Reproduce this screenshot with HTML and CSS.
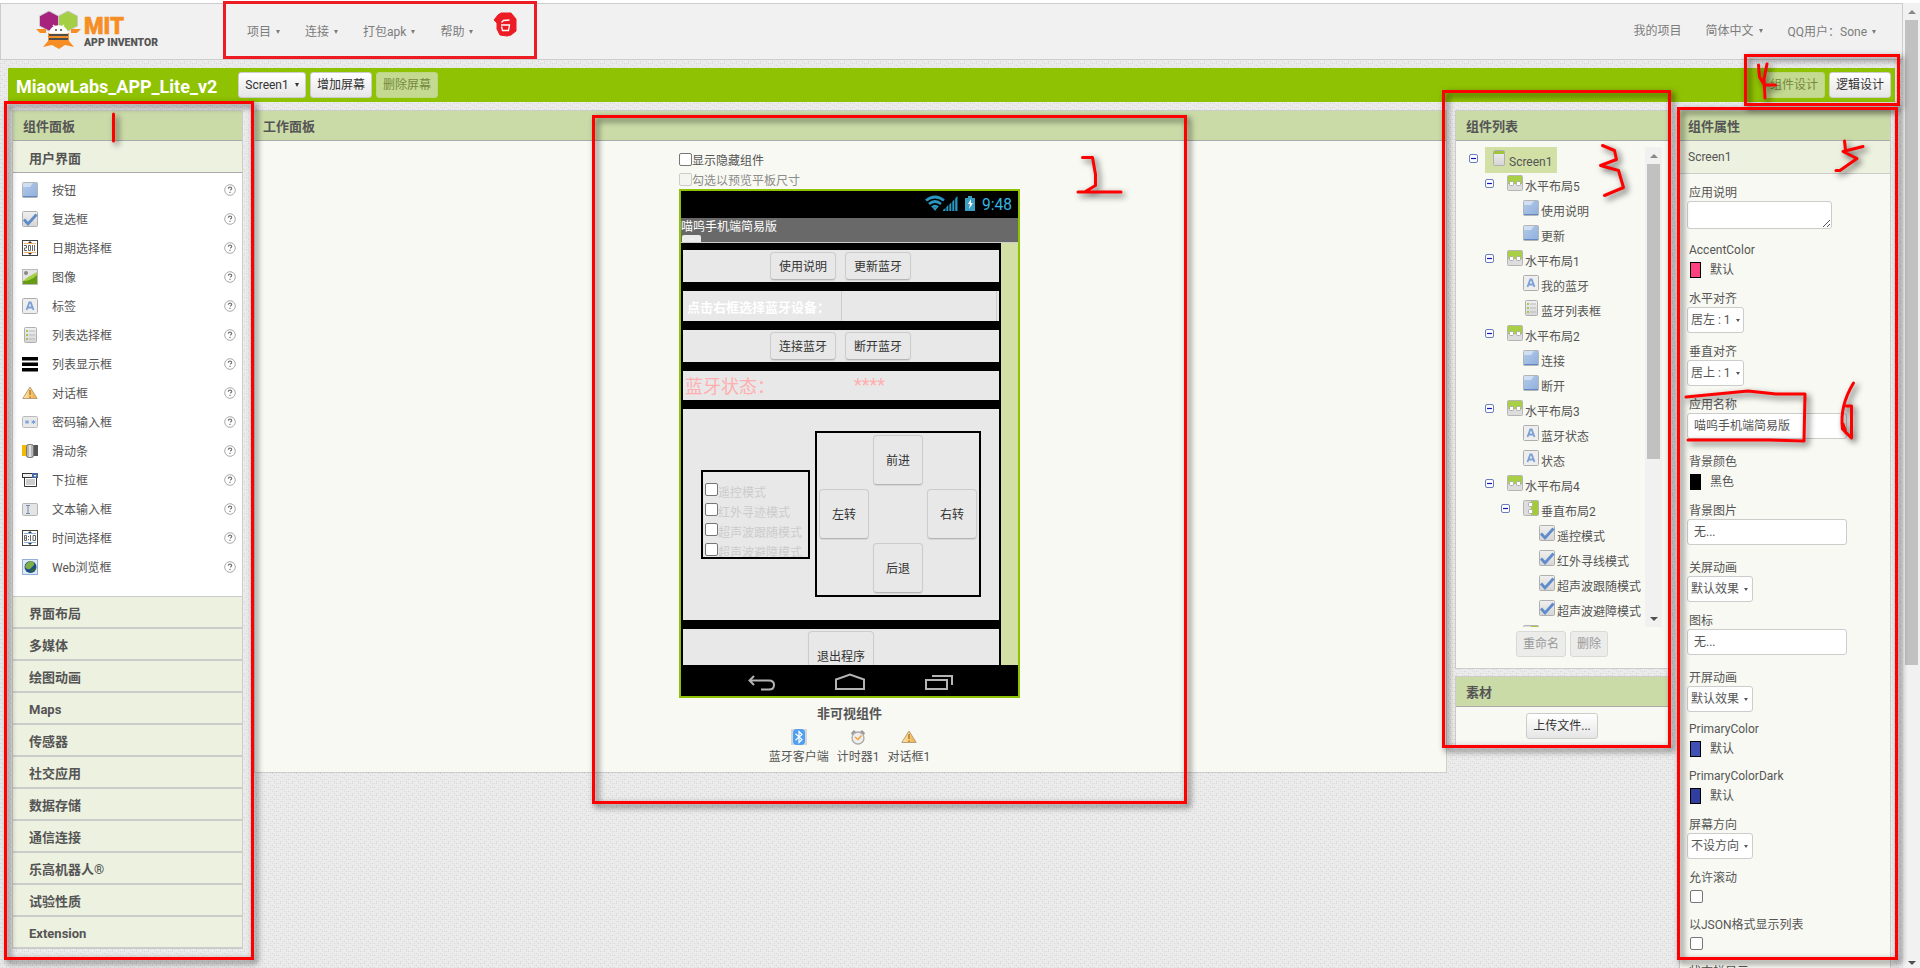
FILE: index.html
```html
<!DOCTYPE html>
<html lang="zh-CN">
<head>
<meta charset="utf-8">
<title>MIT App Inventor</title>
<link rel="stylesheet" href="styles.css">
</head>
<body>
<svg class="defs" width="0" height="0" aria-hidden="true">
  <defs>
    <linearGradient id="gBlue" x1="0" y1="0" x2="1" y2="1"><stop offset="0" stop-color="#b4cbea"/><stop offset="1" stop-color="#8fafdb"/></linearGradient>
    <linearGradient id="gGrey" x1="0" y1="0" x2="0" y2="1"><stop offset="0" stop-color="#f0f0f0"/><stop offset="1" stop-color="#d5d5d5"/></linearGradient>
    <linearGradient id="gWarn" x1="0" y1="0" x2="1" y2="0"><stop offset="0" stop-color="#ffe9b0"/><stop offset="1" stop-color="#f0a93c"/></linearGradient>
    <symbol id="i-button" viewBox="0 0 16 16"><rect x=".5" y=".5" width="15" height="15" rx="1" fill="url(#gBlue)" stroke="#b5b5b5"/><path d="M1 14h14v1H1z" fill="#5f88c4"/><path d="M1 1h10L8 5H1z" fill="#e0eaf8" opacity=".7"/></symbol>
    <symbol id="i-check" viewBox="0 0 16 16"><rect x=".5" y=".5" width="15" height="15" rx="1" fill="url(#gGrey)" stroke="#b0b0b0"/><path d="M2 8.5 6 13l8.5-9.5" fill="none" stroke="#5f8bcb" stroke-width="2.8"/></symbol>
    <symbol id="i-date" viewBox="0 0 16 16"><rect x=".5" y=".5" width="15" height="15" fill="#fff" stroke="#444"/><path d="M6 3l2-2 2 2zM6 13l2 2 2-2z" fill="#333"/><path d="M2 3.500h12M2 12.500h12" stroke="#f0b070"/><path d="M2 5.500h2.500v2.500H2.500v2.500H5M6.500 5.500h2v5h-2zM10.500 5v6M12.500 5v6" fill="none" stroke="#666"/></symbol>
    <symbol id="i-image" viewBox="0 0 16 16"><rect x=".5" y=".5" width="15" height="15" fill="#e4e4e4" stroke="#bbb"/><path d="M1 12 6 8l9-5v12H1z" fill="#a5d043"/><path d="M1 12q8 0 14-6v9H1z" fill="#669c12"/><circle cx="4" cy="4" r="2" fill="#888"/></symbol>
    <symbol id="i-label" viewBox="0 0 16 16"><rect x=".5" y=".5" width="15" height="15" rx="1" fill="#eee" stroke="#aeaeae"/><path d="M4.500 12 7.300 4.500h1.400L11.500 12M5.500 9.500h5" fill="none" stroke="#7c9fd6" stroke-width="1.800"/></symbol>
    <symbol id="i-list" viewBox="0 0 16 16"><rect x="2.500" y=".5" width="12" height="15" rx="1" fill="url(#gGrey)" stroke="#b0b0b0"/><path d="M4 3h2v2H4zM4 7h2v2H4zM4 11h2v2H4z" fill="#a5c957"/><path d="M7 4h6M7 8h6M7 12h6" stroke="#bbb"/></symbol>
    <symbol id="i-listview" viewBox="0 0 16 16"><path d="M0 1h16v3.500H0zM0 6.500h16V10H0zM0 12h16v3.500H0z" fill="#000"/></symbol>
    <symbol id="i-warn" viewBox="0 0 16 16"><path d="M8 2 .8 13.500h14.400z" fill="url(#gWarn)" stroke="#b9a07c"/><path d="M8 5v5M8 11.500V13" stroke="#a36f1f" stroke-width="1.200"/></symbol>
    <symbol id="i-pass" viewBox="0 0 16 16"><rect x=".5" y="2.500" width="15" height="11" rx="1" fill="#e9e9e9" stroke="#bbb"/><path d="M5 6v4M3 7l4 2M3 9l4-2M11.500 6v4M9.500 7l4 2M9.500 9l4-2" stroke="#7ba2dc"/></symbol>
    <symbol id="i-slider" viewBox="0 0 16 16"><path d="M0 2h5v11H0z" fill="#f6b900"/><path d="M11 2h5v11h-5z" fill="#555"/><rect x="4.500" y="1.500" width="7" height="13" rx="2" fill="#b5b5b5" stroke="#777"/><path d="M8 2v12" stroke="#e0e0e0" stroke-width="2"/></symbol>
    <symbol id="i-spinner" viewBox="0 0 16 16"><path d="M2.500 5v9.500h12V5" fill="#fff" stroke="#333"/><rect x=".5" y="1.500" width="15" height="4" fill="#eee" stroke="#333"/><rect x="10" y="1" width="6" height="5" fill="#43699f"/><path d="M11.500 3h3L13 5z" fill="#fff"/><path d="M4 8h9M4 10h9M4 12h9" stroke="#999"/></symbol>
    <symbol id="i-text" viewBox="0 0 16 16"><rect x=".5" y="2.500" width="15" height="12" rx="1" fill="#e4e4e4" stroke="#b5b5b5"/><path d="M4 4.500h4M6 4.500v8M4 12.500h4" stroke="#7089b4"/></symbol>
    <symbol id="i-time" viewBox="0 0 16 16"><rect x=".5" y=".5" width="15" height="15" fill="#fff" stroke="#444"/><path d="M6 3l2-2 2 2zM6 13l2 2 2-2z" fill="#333"/><path d="M2 3.500h12M2 12.500h12" stroke="#8ab4e0"/><path d="M2.500 5.500h2v5h-2zM2.500 8h2M6.500 6v1.200M6.500 9v1.200M8.500 5v6M11 5.500h2.500v5H11z" fill="none" stroke="#666"/></symbol>
    <symbol id="i-web" viewBox="0 0 16 16"><rect x=".5" y=".5" width="15" height="15" fill="#dfe9f4" stroke="#8fb0d8"/><circle cx="8.500" cy="8" r="6" fill="#1e4c86"/><path d="M3 8q1-5 6-6 4 1 3 4l-4 4q-3 1-5-2z" fill="#7fae46"/><path d="M8 13q4 0 6-4l-4 1z" fill="#2f6b2a"/></symbol>
    <symbol id="i-screen" viewBox="0 0 16 16"><rect x="2.500" y=".5" width="11" height="15" rx="1" fill="url(#gGrey)" stroke="#b0b0b0"/><path d="M3 1h10v3H3z" fill="#9ec53c"/></symbol>
    <symbol id="i-harr" viewBox="0 0 16 16"><rect x=".5" y=".5" width="15" height="15" rx="1" fill="#ddd" stroke="#b5b5b5"/><path d="M1 1h14v8H1z" fill="#a9cf45"/><rect x="2.500" y="6.500" width="4" height="4" rx="1" fill="#fff" stroke="#aaa"/><rect x="9.500" y="6.500" width="4" height="4" rx="1" fill="#fff" stroke="#aaa"/></symbol>
    <symbol id="i-varr" viewBox="0 0 16 16"><rect x=".5" y=".5" width="15" height="15" rx="1" fill="#ddd" stroke="#b5b5b5"/><path d="M8 1h7v14H8z" fill="#a3cb38"/><rect x="5.500" y="2.500" width="4" height="4" rx="1" fill="#fff" stroke="#aaa"/><rect x="5.500" y="9.500" width="4" height="4" rx="1" fill="#fff" stroke="#aaa"/></symbol>
    <symbol id="i-bt" viewBox="0 0 16 16"><rect width="16" height="16" fill="#d6d6d6"/><rect x="2" width="12" height="16" rx="4" fill="#4c9ff2"/><path d="M4.500 4.800 11 10.500 8 13.500v-11l3 3-6.500 5.700" fill="none" stroke="#fff" stroke-width="1.200"/></symbol>
    <symbol id="i-clock" viewBox="0 0 16 16"><path d="M1 4l3-3 2 2-4 3zM15 4l-3-3-2 2 4 3z" fill="#999"/><circle cx="8" cy="9" r="6" fill="#eee" stroke="#aaa" stroke-width="1.300"/><path d="M5 8l3 2.500 3.500-4" fill="none" stroke="#f2a33a" stroke-width="1.500"/></symbol>
    <symbol id="i-help" viewBox="0 0 12 12"><circle cx="6" cy="6" r="5.300" fill="#fff" stroke="#aaa"/><path d="M4.300 4.700q0-1.500 1.700-1.500t1.700 1.400q0 .9-1.600 1.700M6 7.800V9" fill="none" stroke="#777" stroke-width="1.200"/></symbol>
    <symbol id="i-minus" viewBox="0 0 9 9"><rect x=".5" y=".5" width="8" height="8" rx="1.500" fill="#fff" stroke="#6a7fbe"/><path d="M2 4.500h5" stroke="#1515b5" stroke-width="1.200"/></symbol>
    <pattern id="weave" width="12" height="12" patternUnits="userSpaceOnUse">
      <rect width="12" height="12" fill="#ebebeb"/>
      <path d="M0 0h1v1H0zM4 0h1v1H4zM8 2h1v1H8zM2 4h1v1H2zM6 6h1v1H6zM10 4h1v1h-1zM0 8h1v1H0zM4 10h1v1H4zM10 10h1v1h-1z" fill="#d4d4d4"/>
      <path d="M2 0h1v1H2zM6 2h1v1H6zM10 0h1v1h-1zM0 4h1v1H0zM4 6h1v1H4zM8 6h1v1H8zM2 8h1v1H2zM6 10h1v1H6zM8 8h1v1H8zM0 2h1v1H0zM6 4h1v1H6zM10 8h1v1h-1z" fill="#dedede"/>
    </pattern>
  </defs>
</svg>

<div class="app">
  <svg class="texture" width="1903" height="965"><rect width="1903" height="965" fill="url(#weave)"/></svg>
  <header class="topbar">
    <svg class="logo" width="130" height="44" viewBox="0 0 130 44">
      <g stroke="#c9c9c9" stroke-width="1"><path d="M13 1l9.500 5v10L13 21 3.500 16V6z" fill="#a6237e"/><path d="M32 1l9.500 5v10L32 21l-9.500-5V6z" fill="#a4cf45"/></g>
      <path d="M0 19h10v4H4zM45 19H35v4h6z" fill="#f68e25"/>
      <path d="M12 23h21v8l5 6-9-2-6 4-7-4-9 2 5-6z" fill="#f68e25"/>
      <path d="M13 25h19M13 29h19" stroke="#4d4d4d" stroke-width="2"/>
      <path d="M14 23q1-7 8.500-7t8.500 7zM17 15l3 3M28 15l-3 3" fill="#fff" stroke="#fff" stroke-width="1.500"/>
      <circle cx="20" cy="20" r="1" fill="#444"/><circle cx="25" cy="20" r="1" fill="#444"/>
      <text x="48" y="24" class="logo-mit" textLength="40" lengthAdjust="spacingAndGlyphs">MIT</text>
      <text x="48" y="36" class="logo-sub" textLength="74" lengthAdjust="spacingAndGlyphs">APP INVENTOR</text>
    </svg>
    <nav class="menu">
      <span class="dd">项目</span><span class="dd">连接</span><span class="dd">打包apk</span><span class="dd">帮助</span>
    </nav>
    <nav class="account"><span>我的项目</span><span class="dd">简体中文</span><span class="dd">QQ用户<span class="colon">：</span>Sone</span></nav>
  </header>

  <div class="projectbar">
    <span class="project">MiaowLabs_APP_Lite_v2</span>
    <button class="btn dd screen-btn">Screen1</button><button class="btn">增加屏幕</button><button class="btn off">删除屏幕</button>
    <span class="spacer"></span>
    <button class="btn off">组件设计</button><button class="btn">逻辑设计</button>
  </div>

  <main class="columns">
    <section class="panel palette">
      <h2>组件面板</h2>
      <h3 class="open">用户界面</h3>
      <ul class="items">
        <li><svg><use href="#i-button"/></svg><span>按钮</span><svg class="q"><use href="#i-help"/></svg></li>
        <li><svg><use href="#i-check"/></svg><span>复选框</span><svg class="q"><use href="#i-help"/></svg></li>
        <li><svg><use href="#i-date"/></svg><span>日期选择框</span><svg class="q"><use href="#i-help"/></svg></li>
        <li><svg><use href="#i-image"/></svg><span>图像</span><svg class="q"><use href="#i-help"/></svg></li>
        <li><svg><use href="#i-label"/></svg><span>标签</span><svg class="q"><use href="#i-help"/></svg></li>
        <li><svg><use href="#i-list"/></svg><span>列表选择框</span><svg class="q"><use href="#i-help"/></svg></li>
        <li><svg><use href="#i-listview"/></svg><span>列表显示框</span><svg class="q"><use href="#i-help"/></svg></li>
        <li><svg><use href="#i-warn"/></svg><span>对话框</span><svg class="q"><use href="#i-help"/></svg></li>
        <li><svg><use href="#i-pass"/></svg><span>密码输入框</span><svg class="q"><use href="#i-help"/></svg></li>
        <li><svg><use href="#i-slider"/></svg><span>滑动条</span><svg class="q"><use href="#i-help"/></svg></li>
        <li><svg><use href="#i-spinner"/></svg><span>下拉框</span><svg class="q"><use href="#i-help"/></svg></li>
        <li><svg><use href="#i-text"/></svg><span>文本输入框</span><svg class="q"><use href="#i-help"/></svg></li>
        <li><svg><use href="#i-time"/></svg><span>时间选择框</span><svg class="q"><use href="#i-help"/></svg></li>
        <li><svg><use href="#i-web"/></svg><span>Web浏览框</span><svg class="q"><use href="#i-help"/></svg></li>
      </ul>
      <h3>界面布局</h3><h3>多媒体</h3><h3>绘图动画</h3><h3>Maps</h3><h3>传感器</h3><h3>社交应用</h3><h3>数据存储</h3><h3>通信连接</h3><h3>乐高机器人®</h3><h3>试验性质</h3><h3>Extension</h3>
    </section>

    <section class="panel viewer">
      <h2>工作面板</h2>
      <div class="stage">
        <label class="opt"><i class="cb"></i>显示隐藏组件</label>
        <label class="opt dim"><i class="cb"></i>勾选以预览平板尺寸</label>
        <div class="phone">
          <div class="status">
            <svg width="88" height="20" viewBox="0 0 88 20">
              <g fill="none" stroke="#2b96c0" stroke-width="2.700"><path d="M1 5.500q9-7 18 0M4 9q6-5 12 0M7 12.300q3-2.500 6 0"/></g><path d="M7.500 12.500h5L10 16z" fill="#2b96c0"/>
              <path d="M18 16v-1l2.500-2v3zM21.300 16v-4l2-2v6zM24.300 16V9.500l2-2V16zM27.300 16V6.500l2-2V16zM30.200 16V3.500l2.300-2.500v15z" fill="#2b96c0"/>
              <path d="M40 3h3V1h4v2h3v13H40z" fill="#3a9dc4"/><path d="M46 4l-3 5h2l-1 5 4-6h-2z" fill="#fff"/>
              <text x="57" y="15" class="clock" textLength="30" lengthAdjust="spacingAndGlyphs">9:48</text>
            </svg>
          </div>
          <div class="titlebar"><span>喵呜手机端简易版</span><i class="stub">.</i></div>
          <div class="screen">
            <div class="canvas">
              <div class="row r1"><span class="key">使用说明</span><span class="key">更新蓝牙</span></div>
              <div class="row r2"><b>点击右框选择蓝牙设备<span class="colon">：</span></b><i class="picker"></i></div>
              <div class="row r3"><span class="key">连接蓝牙</span><span class="key">断开蓝牙</span></div>
              <div class="row r4"><span class="st">蓝牙状态<span class="colon">：</span></span><span class="stars">****</span></div>
              <div class="row r5">
                <div class="modes"><label><i class="cb"></i>遥控模式</label><label><i class="cb"></i>红外寻迹模式</label><label><i class="cb"></i>超声波跟随模式</label><label><i class="cb"></i>超声波避障模式</label></div>
                <div class="pad"><span></span><span class="key">前进</span><span></span><span class="key">左转</span><span></span><span class="key">右转</span><span></span><span class="key">后退</span><span></span></div>
              </div>
              <div class="row r6"><span class="key tall">退出程序</span></div>
            </div>
          </div>
          <div class="navbar">
            <svg width="337" height="31" viewBox="0 0 337 31" fill="none" stroke="#b4b4b4" stroke-width="2">
              <path d="M73 11 68.500 15.500 73 20M69 15.500h19q5 0 5 4.500t-5 4.500h-8"/>
              <path d="M155 24V14.500l14-5 14 5V24z"/>
              <path d="M245 15h21v9h-21zM251 11h20v9"/>
            </svg>
          </div>
        </div>
        <div class="hidden-title">非可视组件</div>
        <div class="hidden-list"><span><svg><use href="#i-bt"/></svg>蓝牙客户端</span><span><svg><use href="#i-clock"/></svg>计时器1</span><span><svg><use href="#i-warn"/></svg>对话框1</span></div>
      </div>
    </section>

    <div class="side">
      <section class="panel tree">
        <h2>组件列表</h2>
        <div class="treebox">
          <ul>
            <li class="l0"><svg class="m"><use href="#i-minus"/></svg><span class="sel"><svg><use href="#i-screen"/></svg>Screen1</span></li>
            <li class="l1"><svg class="m"><use href="#i-minus"/></svg><svg><use href="#i-harr"/></svg>水平布局5</li>
            <li class="l2"><svg><use href="#i-button"/></svg>使用说明</li>
            <li class="l2"><svg><use href="#i-button"/></svg>更新</li>
            <li class="l1"><svg class="m"><use href="#i-minus"/></svg><svg><use href="#i-harr"/></svg>水平布局1</li>
            <li class="l2"><svg><use href="#i-label"/></svg>我的蓝牙</li>
            <li class="l2"><svg><use href="#i-list"/></svg>蓝牙列表框</li>
            <li class="l1"><svg class="m"><use href="#i-minus"/></svg><svg><use href="#i-harr"/></svg>水平布局2</li>
            <li class="l2"><svg><use href="#i-button"/></svg>连接</li>
            <li class="l2"><svg><use href="#i-button"/></svg>断开</li>
            <li class="l1"><svg class="m"><use href="#i-minus"/></svg><svg><use href="#i-harr"/></svg>水平布局3</li>
            <li class="l2"><svg><use href="#i-label"/></svg>蓝牙状态</li>
            <li class="l2"><svg><use href="#i-label"/></svg>状态</li>
            <li class="l1"><svg class="m"><use href="#i-minus"/></svg><svg><use href="#i-harr"/></svg>水平布局4</li>
            <li class="l2 branch"><svg class="m"><use href="#i-minus"/></svg><svg><use href="#i-varr"/></svg>垂直布局2</li>
            <li class="l3"><svg><use href="#i-check"/></svg>遥控模式</li>
            <li class="l3"><svg><use href="#i-check"/></svg>红外寻线模式</li>
            <li class="l3"><svg><use href="#i-check"/></svg>超声波跟随模式</li>
            <li class="l3"><svg><use href="#i-check"/></svg>超声波避障模式</li>
            <li class="l2"><svg><use href="#i-varr"/></svg></li>
          </ul>
          <div class="sb inner"><i class="up"></i><i class="thumb"></i><i class="down"></i></div>
        </div>
        <div class="tree-actions"><button class="btn off2">重命名</button><button class="btn off2">删除</button></div>
      </section>
      <section class="panel media">
        <h2>素材</h2>
        <button class="btn upload">上传文件...</button>
      </section>
    </div>

    <section class="panel props">
      <h2>组件属性</h2>
      <div class="current">Screen1</div>
      <div class="list">
        <div class="p h57"><label>应用说明</label><div class="area"><svg width="9" height="9" viewBox="0 0 9 9" stroke="#555"><path d="M1 8 8 1M5 8l3-3"/></svg></div></div>
        <div class="p h49"><label>AccentColor</label><div class="color"><i class="sw pink"></i>默认</div></div>
        <div class="p h53"><label>水平对齐</label><div class="select dd">居左 : 1</div></div>
        <div class="p h53"><label>垂直对齐</label><div class="select dd">居上 : 1</div></div>
        <div class="p h57"><label>应用名称</label><div class="input">喵呜手机端简易版</div></div>
        <div class="p h49"><label>背景颜色</label><div class="color"><i class="sw black"></i>黑色</div></div>
        <div class="p h57"><label>背景图片</label><div class="input">无...</div></div>
        <div class="p h53"><label>关屏动画</label><div class="select wide dd">默认效果</div></div>
        <div class="p h57"><label>图标</label><div class="input">无...</div></div>
        <div class="p h51"><label>开屏动画</label><div class="select wide dd">默认效果</div></div>
        <div class="p h47"><label>PrimaryColor</label><div class="color"><i class="sw indigo"></i>默认</div></div>
        <div class="p h49"><label>PrimaryColorDark</label><div class="color"><i class="sw navy"></i>默认</div></div>
        <div class="p h53"><label>屏幕方向</label><div class="select wide dd">不设方向</div></div>
        <div class="p h47"><label>允许滚动</label><i class="cb"></i></div>
        <div class="p h47"><label>以JSON格式显示列表</label><i class="cb"></i></div>
        <div class="p h47"><label>状态栏显示</label><i class="cb"></i></div>
      </div>
    </section>
  </main>
</div>
<div class="sb page"><i class="up"></i><i class="thumb"></i><i class="down"></i></div>

<svg class="marks" width="1920" height="968" viewBox="0 0 1920 968" fill="none">
  <rect x="224.500" y="2.500" width="311" height="55" stroke="#ed1c24" stroke-width="3"/>
  <path d="M498 15l3-2h10l5 6v12l-5 4-4 1-7-1-3-6v-6l-3-3z" fill="#ed1c24" stroke="#ed1c24" stroke-width="1"/>
  <path d="M501.500 22.500l2-2 6-.5M501 25h8.500l-1 5.500h-6l-1-4" stroke="#fff" stroke-width="1.300"/>
  <g class="shadowed" stroke="#f00" stroke-width="3">
    <rect x="5.500" y="102.500" width="247" height="856"/>
    <rect x="593.500" y="116.500" width="592" height="686"/>
    <rect x="1443.500" y="91.500" width="226" height="655"/>
    <rect x="1745.500" y="55.500" width="153" height="49"/>
    <rect x="1678.500" y="108.500" width="218" height="850"/>
    <g stroke-linecap="round" stroke-linejoin="round">
      <path d="M113.500 114v27"/>
      <path d="M1082.500 157.500h10l3 17v11l-10 6M1078 192h43"/>
      <path d="M1602.500 145.500l12 5 2 9-16 6 18 5 5 17-19 8"/>
      <path d="M1758.500 65l1 12 5 8h11M1767 64l-3 15 1 19"/>
      <path d="M1844.500 141l1 9M1863 146.500l-20 5 14 7-17 12h-4"/>
      <path d="M1686 397l62-6 28 3h29l-1 47-35-1h-81"/>
      <path d="M1853.500 383q-14 23-11 46l9 9v-32h-5M1843 424l3 9"/>
    </g>
  </g>
</svg>
</body>
</html>
```

FILE: styles.css
```css
* { box-sizing: border-box; }
body {
  margin: 0; width: 1920px; height: 968px; overflow: hidden; display: flex; position: relative;
  padding-top: 3px; background: #fff; color: #555;
  font: 12px/16px Roboto, "Noto Sans CJK SC", sans-serif;
}
h2, h3, ul { margin: 0; padding: 0; list-style: none; }
i { font-style: normal; }
svg { flex: none; display: block; }
.defs { position: absolute; }

.app { width: 1903px; height: 965px; overflow: hidden; position: relative; z-index: 0; }
.texture { position: absolute; left: 0; top: 0; z-index: -1; }
.topbar {
  height: 57px; display: flex; align-items: center; padding: 0 25px 0 35px;
  background: #f1f1f1; border: 1px solid #ccc; color: #7c7c7c;
}
.logo-mit { font: 900 23px Roboto, sans-serif; fill: #f68e25; stroke: #f68e25; stroke-width: .6px; }
.logo-sub { font: 900 10px Roboto, sans-serif; fill: #555; }
.menu { display: flex; gap: 24px; margin-left: 81px; }
.account { display: flex; gap: 24px; margin-left: auto; }
.colon { font-family: "Noto Sans CJK TC", sans-serif; }
.dd::after {
  content: ""; display: inline-block; vertical-align: 2px; margin-left: 6px;
  border: 2.500px solid transparent; border-top: 4px solid currentColor; border-bottom: 0;
}
.menu .dd::after, .account .dd::after { margin-left: 5px; margin-right: 1px; }

.projectbar {
  height: 34px; margin: 8px 8px 0 8px; padding: 4px 4px 0 8px;
  display: flex; gap: 4px; background: #8fc202;
}
.project { width: 218px; color: #fff; font-size: 18px; font-weight: 700; line-height: 30px; white-space: nowrap; }
.spacer { flex: 1; }
.btn {
  height: 26px; padding: 0 6px; border: 1px solid #ccc; border-radius: 3px; white-space: nowrap;
  background: linear-gradient(#fff, #e6e6e6); color: #333; font: inherit; line-height: 23px;
}
.screen-btn { width: 68px; }
.btn.off { background: #c4da90; border-color: #bcd582; color: #76893f; }
.btn.off2 { background: #ececea; border-color: #d9d9d7; color: #999; }

.columns { display: flex; align-items: flex-start; padding: 8px 0 0 12px; }
.panel { background: #f8f9f2; border: 1px solid #ccc; flex: none; }
.panel h2 {
  height: 30px; padding-left: 10px; background: #cbdba8; border-bottom: 1px solid #aaa;
  font-size: 13px; line-height: 32px; font-weight: 700;
}

.palette { width: 231px; height: 839px; background: #edf1e0; }
.palette h3 { height: 32px; padding-left: 16px; border-bottom: 2px solid #ccc; font-size: 13px; line-height: 33px; font-weight: 700; background: #edf1e0; }
.palette h3.open { border-bottom: 1px solid #aaa; line-height: 35px; }
.items { height: 424px; padding: 2px 6px 0 9px; background: #fff; border-bottom: 1px solid #ccc; }
.items li { display: flex; align-items: center; height: 29px; }
.items svg { width: 16px; height: 16px; }
.items span { flex: 1; padding: 2px 0 0 14px; }
.items svg.q { width: 12px; height: 12px; }

.viewer { width: 1193px; height: 663px; margin-left: 11px; }
.viewer h2 { padding-left: 8px; }
.stage { width: 341px; margin-left: 424px; padding-top: 9px; }
.opt { display: flex; height: 20px; align-items: center; padding-top: 2px; }
.opt + .opt { margin-bottom: -1px; }
.dim { color: #8c8c8c; }
.cb { display: block; width: 13px; height: 13px; flex: none; border: 1px solid #767676; border-radius: 2px; background: #fff; }
.opt .cb { margin-top: -4px; }
.dim .cb { border-color: #ccc; background: #f4f4f0; }
.phone { width: 341px; height: 509px; border: 2px solid #8fc202; background: #000; }
.status { height: 27px; display: flex; justify-content: flex-end; padding: 4px 5px 0 0; }
.clock { font: 16px Roboto, sans-serif; fill: #33b5e5; }
.titlebar { height: 25px; background: #696969; border-bottom: 1px solid #ccc; color: #fff; overflow: hidden; }
.titlebar span { display: block; height: 17px; line-height: 18px; }
.stub { display: block; width: 19px; height: 8px; margin-left: 1px; background: #ececec; border-radius: 2px 2px 0 0; line-height: 2px; text-align: center; }
.screen { height: 422px; background: #d2e0a6; overflow: hidden; }
.canvas { width: 320px; height: 422px; padding: 7px 2px 0; background: #000; }
.row { display: flex; background: #e8e8e8; margin-bottom: 9px; justify-content: center; }
.r1, .r3 { height: 32px; padding: 2px 1px 0 0; gap: 9px; }
.r1 .key, .r3 .key { width: 66px; height: 28px; }
.key {
  display: flex; align-items: center; justify-content: center; border: 1px solid #ccc; border-bottom-color: #b5b5b5;
  border-radius: 4px; color: #333; box-shadow: 0 1px 1px #d5d5d5; padding-top: 1px;
}
.r2 { height: 30px; justify-content: flex-start; }
.r2 b { width: 158px; padding-left: 4px; color: #fff; font-size: 13px; line-height: 32px; white-space: nowrap; }
.picker { width: 156px; border: 1px solid #ccc; border-width: 0 1px; }
.r4 { height: 29px; justify-content: flex-start; padding-left: 2px; color: #ffafaf; font-size: 18px; line-height: 29px; }
.st { width: 169px; }
.stars { line-height: 27px; }
.r5 { height: 211px; justify-content: flex-start; padding-left: 18px; }
.modes { width: 109px; height: 89px; margin-top: 61px; padding: 11px 2px 0; border: 2px solid #000; overflow: hidden; color: #ccc; }
.modes label { display: flex; height: 20px; line-height: 20px; white-space: nowrap; }
.pad {
  width: 166px; height: 166px; margin: 22px 0 0 5px; padding: 2px; border: 2px solid #000;
  display: grid; grid-template: repeat(3, 50px) / repeat(3, 50px); gap: 4px;
}
.r6 { height: 60px; padding-top: 2px; }
.tall { width: 66px; height: 50px; }
.navbar { height: 31px; }
.hidden-title { margin-top: 8px; text-align: center; font-weight: 700; font-size: 13px; }
.hidden-list { display: flex; justify-content: center; gap: 8px; margin-top: 7px; }
.hidden-list span { display: flex; flex-direction: column; align-items: center; gap: 4px; }
.hidden-list svg { width: 16px; height: 16px; }

.side { width: 215px; margin-left: 8px; }
.tree { height: 559px; }
.treebox { display: flex; height: 480px; margin-top: 6px; overflow: hidden; }
.treebox ul { width: 189px; height: 480px; overflow: hidden; }
.treebox li { display: flex; height: 25px; padding-top: 3px; line-height: 25px; white-space: nowrap; }
.treebox li svg { width: 16px; height: 16px; margin-right: 2px; }
.treebox li svg.m { width: 9px; height: 9px; margin: 4px 13px 0 0; }
.treebox li.l0 { padding: 0 0 0 13px; height: 25px; }
.treebox li.l0 svg.m { margin: 7px 7px 0 0; }
.sel { display: flex; height: 26px; padding: 3px 5px 0 6px; background: #d2e0a6; }
.treebox .l1 { padding-left: 29px; }
.treebox .l2 { padding-left: 67px; }
.treebox .l2.branch { padding-left: 45px; }
.treebox .l3 { padding-left: 83px; }
.tree-actions { display: flex; gap: 4px; padding: 4px 0 0 60px; }
.media { height: 70px; margin-top: 7px; }
.upload { display: block; width: 72px; margin: 6px 0 0 70px; }

.props { width: 212px; height: 1000px; margin-left: 9px; }
.props h2 { padding-left: 8px; }
.current { height: 33px; padding-left: 8px; line-height: 33px; background: #edf1e0; border-bottom: 1px solid #ccc; }
.list { padding: 11px 0 0 7px; }
.p label { display: block; height: 16px; padding-left: 2px; }
.h47 { height: 47px; } .h49 { height: 49px; } .h51 { height: 51px; } .h53 { height: 53px; } .h57 { height: 57px; }
.area, .input, .select { border: 1px solid #ccc; border-radius: 3px; background: #fff; height: 26px; line-height: 24px; }
.area { width: 145px; height: 28px; display: flex; justify-content: flex-end; align-items: flex-end; }
.input { width: 160px; padding-left: 6px; }
.select { width: 57px; padding-left: 3px; white-space: nowrap; }
.select.wide { width: 66px; }
.select.dd::after { margin-left: 5px; border-width: 3px 2px 0; }
.color { display: flex; align-items: center; gap: 9px; height: 24px; padding-left: 3px; }
.sw { width: 11px; height: 16px; border: 1px solid #000; }
.pink { background: #ff4081; } .black { background: #000; } .indigo { background: #3f51b5; } .navy { background: #303f9f; }
.p .cb { margin: 4px 0 0 3px; }

.sb { width: 17px; background: #f1f1f1; display: flex; flex-direction: column; align-items: center; }
.sb .up, .sb .down { border: 4px solid transparent; }
.sb .up { border-top: 0; border-bottom-color: #888; margin: 7px 0 6px; }
.sb .down { border-bottom: 0; border-top-color: #505050; margin: auto 0 6px; }
.thumb { width: 13px; background: #c1c1c1; }
.page { height: 965px; }
.page .thumb { height: 645px; }
.page .down { margin-bottom: 3px; }
.inner .thumb { height: 295px; }

.marks { position: absolute; left: 0; top: 0; }
.shadowed { filter: drop-shadow(3px 3px 3px rgba(0, 0, 0, .65)); }
```
